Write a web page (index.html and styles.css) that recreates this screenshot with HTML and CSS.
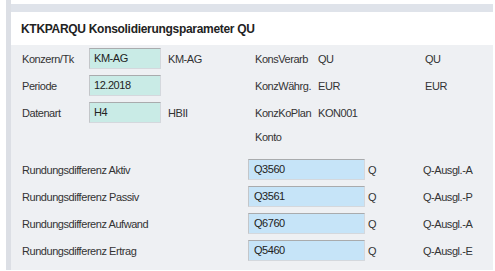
FILE: index.html
```html
<!DOCTYPE html>
<html>
    <head>
        <title>KTKPARQU Konsolidierungsparameter QU</title>
        <link rel="stylesheet" href="styles.css">
    </head>
    <body>
        <div class="frame">
            <div class="topbar"></div>
            <h1 class="title">KTKPARQU Konsolidierungsparameter QU</h1>
            <div class="panel">
                <div class="head-grid">
                    <span class="lbl">Konzern/Tk</span>
                    <div class="field teal">KM-AG</div>
                    <span class="txt">KM-AG</span>
                    <span class="lbl">KonsVerarb</span>
                    <span class="txt">QU</span>
                    <span class="txt">QU</span>

                    <span class="lbl">Periode</span>
                    <div class="field teal">12.2018</div>
                    <span></span>
                    <span class="lbl">KonzWährg.</span>
                    <span class="txt">EUR</span>
                    <span class="txt">EUR</span>

                    <span class="lbl">Datenart</span>
                    <div class="field teal">H4</div>
                    <span class="txt">HBII</span>
                    <span class="lbl">KonzKoPlan</span>
                    <span class="txt">KON001</span>
                    <span></span>

                    <span></span>
                    <span></span>
                    <span></span>
                    <span class="lbl">Konto</span>
                    <span></span>
                    <span></span>
                </div>

                <div class="round-grid">
                    <span class="lbl">Rundungsdifferenz Aktiv</span>
                    <div class="field blue">Q3560</div>
                    <span class="txt">Q</span>
                    <span class="txt">Q-Ausgl.-A</span>

                    <span class="lbl">Rundungsdifferenz Passiv</span>
                    <div class="field blue">Q3561</div>
                    <span class="txt">Q</span>
                    <span class="txt">Q-Ausgl.-P</span>

                    <span class="lbl">Rundungsdifferenz Aufwand</span>
                    <div class="field blue">Q6760</div>
                    <span class="txt">Q</span>
                    <span class="txt">Q-Ausgl.-A</span>

                    <span class="lbl">Rundungsdifferenz Ertrag</span>
                    <div class="field blue">Q5460</div>
                    <span class="txt">Q</span>
                    <span class="txt">Q-Ausgl.-E</span>
                </div>
            </div>
        </div>
    </body>
</html>
```

FILE: styles.css
```css
body { margin: 0; background: #fff; font-family: Arial, "Liberation Sans", sans-serif; font-size: 11px; letter-spacing: -0.45px; color: #333; }
.frame { margin: 0 2px 3px 6px; border-left: 5px solid #dcdfe5; padding-top: 4px; }
.topbar { height: 8px; background: #dfe3ea; }
.title { margin: 0; height: 33px; line-height: 35px; padding-left: 10px; font-size: 12px; font-weight: bold; letter-spacing: -0.3px; color: #222; background: #fff; }
.panel { background: #eef0f3; padding: 3px 0 9px 11px; }
.head-grid { display: grid; grid-template-columns: 67px 79px 87px 63px 107px 1fr; grid-template-rows: 21px 21px 21px 16px; row-gap: 6px; align-items: center; }
.round-grid { display: grid; grid-template-columns: 226px 120px 55px 1fr; grid-auto-rows: 21px; row-gap: 6px; align-items: center; margin-top: 14px; }
.lbl, .txt { white-space: nowrap; }
.field { box-sizing: border-box; height: 21px; line-height: 19px; padding-left: 4px; border: 1px solid #d4d8dd; border-top-color: #a9abad; border-left-color: #c3c6c9; color: #222; }
.teal { width: 72px; background: #c9ebe6; }
.blue { width: 117px; padding-left: 5px; background: #c6e4f8; }
```
